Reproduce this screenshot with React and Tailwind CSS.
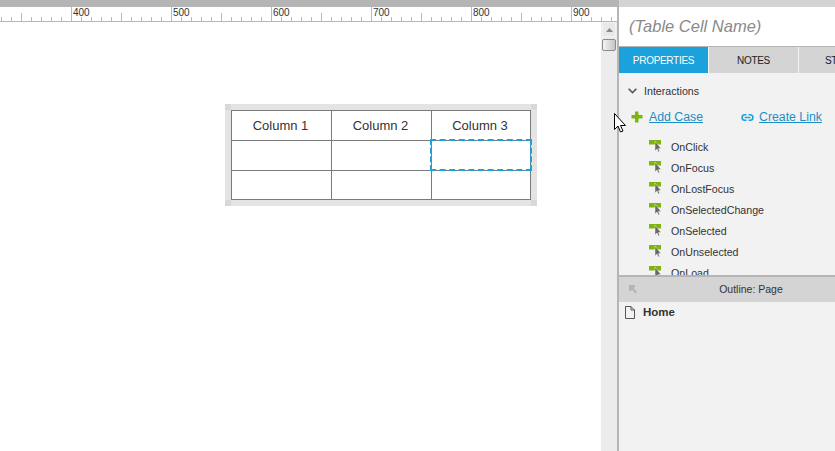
import React from 'react';
import { Link2 } from 'lucide-react';

const rulerLabels = [400, 500, 600, 700, 800, 900];
const events = ['OnClick', 'OnFocus', 'OnLostFocus', 'OnSelectedChange', 'OnSelected', 'OnUnselected', 'OnLoad'];
const font = { fontFamily: '"Liberation Sans", Arial, sans-serif' };

function RulerTicks() {
  const ticks = [];
  for (let x = 1; x < 617; x += 10) {
    const n = (x - 1) / 10;
    let h = 4;
    if (n % 10 === 7) h = 14;
    else if (n % 5 === 2) h = 8;
    ticks.push(<rect key={x} x={x} y={14 - h} width="1" height={h} fill="#b9b9b9" />);
  }
  return (
    <svg width="617" height="15" className="absolute left-0 top-0">
      {ticks}
      <rect x="0" y="14" width="617" height="1" fill="#b5b5b5" />
    </svg>
  );
}

function Ruler() {
  return (
    <div className="relative h-[15px] bg-white overflow-hidden">
      <RulerTicks />
      <div className="relative flex pl-[73px] text-[10px] leading-[11px] text-[#333]">
        {rulerLabels.map((label) => (
          <div key={label} className="w-[100px] shrink-0">
            {label}
          </div>
        ))}
      </div>
    </div>
  );
}

function TableWidget() {
  const cell = 'border-r border-b border-[#7b7b7b] flex items-center justify-center pr-[2px] text-[13px] text-[#333]';
  const corner = 'absolute w-[6px] h-[6px] bg-[#d8d8d8]';
  return (
    <div className="relative w-[312px] h-[102px] bg-[#e4e4e4] p-[6px]">
      <div className={`${corner} left-0 top-0`} />
      <div className={`${corner} right-0 top-0`} />
      <div className={`${corner} left-0 bottom-0`} />
      <div className={`${corner} right-0 bottom-0`} />
      <div className="grid grid-cols-[100px_100px_99px] grid-rows-[30px_30px_29px] w-[300px] h-[90px] bg-white border-l border-t border-[#7b7b7b]">
        <div className={cell}>Column 1</div>
        <div className={cell}>Column 2</div>
        <div className={cell}>Column 3</div>
        <div className={cell} />
        <div className={cell} />
        <div className={cell} />
        <div className={cell} />
        <div className={cell} />
        <div className={cell} />
      </div>
      <div className="absolute left-[205px] top-[35px] w-[102px] h-[32px] border-2 border-dashed border-[#1ba1dc]" />
    </div>
  );
}

function Scrollbar() {
  return (
    <div className="w-[16px] bg-[#ececec] flex flex-col items-center">
      <div className="w-[14px] h-[15px] bg-[#e8e8e8] border border-[#f2f2f2] flex items-center justify-center">
        <svg width="7" height="4">
          <path d="M0 4 L3.5 0 L7 4 Z" fill="#8a8a8a" />
        </svg>
      </div>
      <div className="mt-[2px] w-[14px] h-[12px] rounded-[2px] border border-[#8c8c8c] bg-gradient-to-r from-[#f4f4f4] to-[#c4c4c4]" />
    </div>
  );
}

function EventIcon() {
  return (
    <svg width="14" height="14" viewBox="0 0 14 14" className="shrink-0">
      <rect x="0" y="0" width="12" height="4.5" fill="#7cb50c" />
      <path d="M6 1 V11 L8 9 L9.3 12 L10.6 11.4 L9.5 8.6 L12 8.4 Z" fill="#6a6a6a" stroke="#f2f2f2" strokeWidth="0.5" />
    </svg>
  );
}

function Properties() {
  return (
    <div className="relative h-[202px] overflow-hidden">
      <div className="flex items-center pl-[9px] pt-[10px] text-[10.67px] text-[#333]">
        <svg width="9" height="6" viewBox="0 0 9 6" fill="none" stroke="#555" strokeWidth="1.6">
          <path d="M0.6 0.8 L4.5 4.6 L8.4 0.8" />
        </svg>
        <span className="ml-[7px]">Interactions</span>
      </div>
      <div className="flex items-center pl-[12px] mt-[9px] text-[12.3px]">
        <svg width="12" height="12" viewBox="0 0 12 12" className="mr-[6px]">
          <path d="M4 0.5h3.5V4H11.5V7.5H7.5V11.5H4V7.5H0.5V4H4Z" fill="#7cb50c" />
        </svg>
        <span className="text-[#1b8fc6] underline">Add Case</span>
        <Link2 size={13} strokeWidth={3} color="#1ba1dc" className="ml-[38px] mr-[5px]" />
        <span className="text-[#1b8fc6] underline">Create Link</span>
      </div>
      <div className="flex flex-col gap-[7px] pl-[30px] pt-[14px]">
        {events.map((name) => (
          <div key={name} className="flex items-center h-[14px] text-[10.67px] text-[#333]">
            <EventIcon />
            <span className="ml-[8px]">{name}</span>
          </div>
        ))}
      </div>
    </div>
  );
}

function RightPanel() {
  return (
    <div className="w-[216px] shrink-0 flex flex-col bg-[#f2f2f2]">
      <div className="h-[7px] bg-[#d4d4d4]" />
      <div className="h-[40px] bg-white border-b border-[#b5b5b5] flex items-center pl-[10px] text-[16.5px] italic text-[#8a8a8a]">
        (Table Cell Name)
      </div>
      <div className="flex h-[26px] text-[10px] tracking-[-0.3px] text-[#222] overflow-hidden">
        <div className="w-[89px] shrink-0 bg-[#1ba1dc] text-white flex items-center justify-center">PROPERTIES</div>
        <div className="w-[89px] shrink-0 ml-[1px] bg-[#d4d4d4] flex items-center justify-center">NOTES</div>
        <div className="w-[60px] shrink-0 ml-[1px] bg-[#d4d4d4] flex items-center pl-[26px]">STYLE</div>
      </div>
      <Properties />
      <div className="h-[2px] bg-[#b5b5b5]" />
      <div className="relative h-[25px] bg-[#d4d4d4] flex items-center justify-center pl-[48px] text-[10.5px] text-[#333]">
        <svg width="10" height="10" viewBox="0 0 10 10" className="absolute left-[9px] top-[7px]">
          <path d="M1 1H7V3.5H5L9 8L7.5 9.5L3.5 5V7H1Z" fill="#b4b4b4" />
        </svg>
        Outline: Page
      </div>
      <div className="flex items-center pl-[6px] pt-[2px] text-[11.5px] font-bold text-[#333]">
        <svg width="10" height="13" viewBox="0 0 10 13" fill="none" stroke="#555">
          <path d="M0.5 0.5H6L9.5 4V12.5H0.5Z M6 0.5V4H9.5" />
        </svg>
        <span className="ml-[8px]">Home</span>
      </div>
    </div>
  );
}

export default function App() {
  return (
    <div className="relative flex w-[835px] h-[451px] overflow-hidden bg-white" style={font}>
      <div className="w-[617px] shrink-0 flex flex-col">
        <div className="h-[7px] bg-[#b5b5b5]" />
        <Ruler />
        <div className="flex flex-1 min-h-0">
          <div className="flex-1 bg-white pl-[225px] pt-[82px]">
            <TableWidget />
          </div>
          <Scrollbar />
        </div>
      </div>
      <div className="w-[2px] shrink-0 bg-[#b5b5b5]" />
      <RightPanel />
      <svg width="13" height="20" viewBox="0 0 13 20" className="absolute left-[614px] top-[113px]">
        <path d="M0.5 0.5V16.5L4 13L6.5 19L9 18L6.5 12.5H11.5Z" fill="#fff" stroke="#000" />
      </svg>
    </div>
  );
}
